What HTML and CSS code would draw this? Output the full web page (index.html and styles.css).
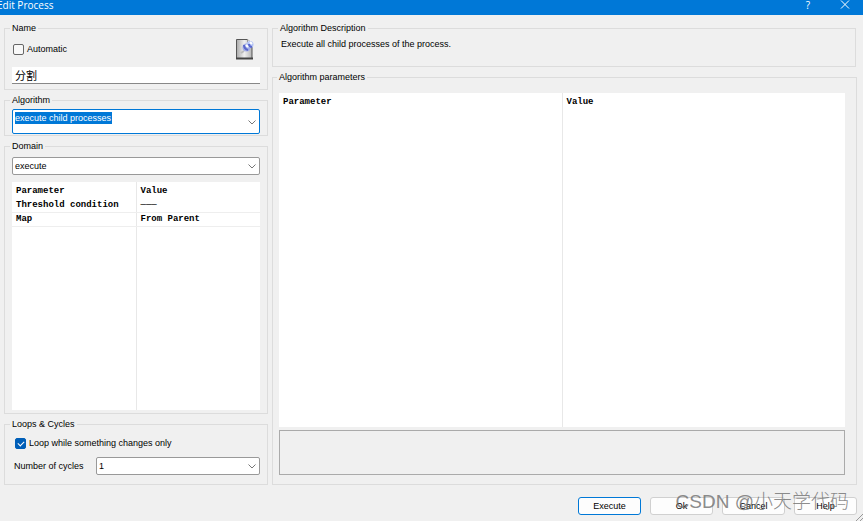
FILE: index.html
```html
<!DOCTYPE html>
<html lang="en">
<head>
    <meta charset="UTF-8">
    <meta name="viewport" content="width=device-width, initial-scale=1.0">
    <title>Edit Process</title>
    <link rel="stylesheet" href="styles.css">
</head>
<body>
    <header class="titlebar">
        <h1>Edit Process</h1>
        <button type="button" class="title-button" aria-label="What's this">?</button>
        <button type="button" class="title-button" aria-label="Close">
            <svg width="10" height="10" viewBox="0 0 10 10"><path d="M1 0.5l8 8M9 0.5l-8 8" stroke="#fff" fill="none"/></svg>
        </button>
    </header>

    <form class="dialog">
        <div class="columns">
            <div class="left">
                <fieldset class="name-group">
                    <legend>Name</legend>
                    <div class="name-row">
                        <label class="check"><input type="checkbox">Automatic</label>
                        <svg class="doc-icon" width="20" height="22" viewBox="0 0 20 22">
                            <defs>
                                <linearGradient id="page" x1="0" y1="0" x2="1" y2="0">
                                    <stop offset="0" stop-color="#a8a8a8"/>
                                    <stop offset="0.5" stop-color="#f0f0f0"/>
                                    <stop offset="1" stop-color="#b4b4b4"/>
                                </linearGradient>
                            </defs>
                            <path d="M1.5 1.5h11l4.500 4v15h-15.500z" fill="url(#page)" stroke="#555"/>
                            <path d="M1 20.500h17" stroke="#444" stroke-width="2"/>
                            <path d="M12.500 1.500v4h4.500" fill="#fff" stroke="#999"/>
                            <path d="M6 15l3-2" stroke="#bbb" stroke-width="2"/>
                            <circle cx="11.500" cy="9.500" r="4" fill="#a3aee6"/>
                            <circle cx="15" cy="6.500" r="3.500" fill="#b3c3f4"/>
                            <path d="M9 7c0 3 1 4 4 5M14 6c0 2 1 3 3 3" stroke="#5a67cc" stroke-width="2" fill="none"/>
                            <path d="M11 7l2 2M15 4l2 2" stroke="#fff" stroke-width="2"/>
                        </svg>
                    </div>
                    <input type="text" class="name-input" aria-label="Name" value="分割">
                </fieldset>

                <fieldset class="algorithm-group">
                    <legend>Algorithm</legend>
                    <div class="combo combo-active">
                        <select aria-label="Algorithm"><option>execute child processes</option></select>
                        <svg width="8" height="5" viewBox="0 0 8 5"><path d="M0.500 0.500L4 4l3.500-3.500" fill="none" stroke="#777"/></svg>
                    </div>
                </fieldset>

                <fieldset class="domain-group">
                    <legend>Domain</legend>
                    <div class="combo">
                        <select aria-label="Domain"><option>execute</option></select>
                        <svg width="8" height="5" viewBox="0 0 8 5"><path d="M0.500 0.500L4 4l3.500-3.500" fill="none" stroke="#777"/></svg>
                    </div>
                    <div class="grid domain-grid">
                        <table>
                            <thead>
                                <tr><th>Parameter</th><th>Value</th></tr>
                            </thead>
                            <tbody>
                                <tr><td>Threshold condition</td><td>───</td></tr>
                                <tr><td>Map</td><td>From Parent</td></tr>
                                <tr class="filler"><td></td><td></td></tr>
                            </tbody>
                        </table>
                    </div>
                </fieldset>

                <fieldset class="loops-group">
                    <legend>Loops &amp; Cycles</legend>
                    <label class="check"><input type="checkbox" checked>Loop while something changes only</label>
                    <div class="cycles-row">
                        <label for="cycles">Number of cycles</label>
                        <div class="combo">
                            <select id="cycles"><option>1</option></select>
                            <svg width="8" height="5" viewBox="0 0 8 5"><path d="M0.500 0.500L4 4l3.500-3.500" fill="none" stroke="#777"/></svg>
                        </div>
                    </div>
                </fieldset>
            </div>

            <div class="right">
                <fieldset class="description-group">
                    <legend>Algorithm Description</legend>
                    <p>Execute all child processes of the process.</p>
                </fieldset>

                <fieldset class="params-group">
                    <legend>Algorithm parameters</legend>
                    <div class="grid params-grid">
                        <table>
                            <thead>
                                <tr><th>Parameter</th><th>Value</th></tr>
                            </thead>
                            <tbody>
                                <tr class="filler"><td></td><td></td></tr>
                            </tbody>
                        </table>
                    </div>
                    <div class="help-box"></div>
                </fieldset>
            </div>
        </div>

        <footer class="buttons">
            <button type="button" class="default">Execute</button>
            <button type="button">Ok</button>
            <button type="button">Cancel</button>
            <button type="button">Help</button>
        </footer>
    </form>

    <div class="watermark">CSDN @小天学代码</div>
    <svg class="grip" width="7" height="7" viewBox="0 0 7 7"><path d="M0 7l7-7M4 7l3-3" stroke="#999"/></svg>
</body>
</html>
```
FILE: styles.css
```css
* {
    box-sizing: border-box;
}
body {
    margin: 0;
    min-height: 100vh;
    display: flex;
    flex-direction: column;
    position: relative;
    overflow: hidden;
    background-color: #f0f0f0;
    color: #000;
    font-family: "Liberation Sans", "Noto Sans CJK SC", sans-serif;
    font-size: 9px;
    line-height: 12px;
}
button, input, select {
    font: inherit;
    color: inherit;
}
.titlebar {
    display: flex;
    align-items: flex-start;
    height: 15px;
    padding-right: 11px;
    background-color: #0078d7;
    color: white;
}
.titlebar h1 {
    flex: 1;
    margin: 0 0 0 -3px;
    font-family: "Open Sans", sans-serif;
    font-size: 10px;
    font-weight: normal;
    line-height: 10px;
}
.title-button {
    width: 12px;
    height: 10px;
    margin-left: 26px;
    padding: 0;
    border: none;
    background: none;
    font-family: "Open Sans", sans-serif;
    font-size: 10px;
    line-height: 10px;
}
.title-button svg {
    display: block;
}
.dialog {
    flex: 1;
    display: flex;
    flex-direction: column;
    padding: 6px 6px 6px 4px;
}
.columns {
    flex: 1;
    display: grid;
    grid-template-columns: 264px 1fr;
    gap: 4px;
}
.left, .right {
    display: flex;
    flex-direction: column;
    gap: 3px;
}
fieldset {
    min-width: 0;
    margin: 0;
    padding: 0 7px;
    border: 1px solid #dcdcdc;
}
legend {
    margin-left: -2px;
    padding: 1px 2px;
}
.name-group {
    height: 69px;
}
.name-row {
    display: flex;
    justify-content: space-between;
    align-items: center;
    height: 28px;
    padding-right: 5px;
}
.name-input {
    width: 100%;
    height: 17px;
    margin-top: 4px;
    padding: 0 3px;
    border: none;
    border-bottom: 1px solid #888;
    background-color: white;
    font-size: 11px;
}
.check {
    display: flex;
    align-items: center;
    gap: 2px;
}
.check input {
    appearance: none;
    width: 11px;
    height: 11px;
    margin: 0 1px;
    border: 1px solid #666;
    border-radius: 2px;
    background-color: #f8f8f8;
}
.check input:checked {
    border-color: #005fb8;
    background-color: #005fb8;
}
.check input:checked::after {
    content: "";
    display: block;
    width: 5px;
    height: 3px;
    margin: 2px;
    border: solid white;
    border-width: 0 0 1px 1px;
    transform: rotate(-45deg);
}
.combo {
    position: relative;
    display: flex;
    flex: 1;
    height: 18px;
    border: 1px solid #999;
    border-radius: 2px;
    background-color: white;
}
.combo select {
    appearance: none;
    flex: 1;
    padding: 0 2px;
    border: none;
    background: none;
    outline: none;
}
.combo svg {
    position: absolute;
    right: 3px;
    top: calc(50% - 2px);
    pointer-events: none;
}
.combo-active {
    height: 25px;
    padding: 2px;
    border-color: #0078d7;
}
.combo-active select {
    flex: none;
    height: 12px;
    padding: 0;
    background-color: #0078d7;
    color: white;
}
.algorithm-group {
    height: 43px;
}
.algorithm-group .combo {
    margin-top: 2px;
}
.domain-group {
    flex: 1;
    display: flex;
    flex-direction: column;
    padding-bottom: 3px;
}
.domain-group .combo {
    flex: none;
    margin-top: 4px;
}
.grid {
    flex: 1;
    display: flex;
    background-color: white;
    font-family: "Liberation Mono", monospace;
    font-size: 9px;
    font-weight: bold;
}
.grid table {
    width: 100%;
    height: 100%;
    border-collapse: collapse;
    table-layout: fixed;
}
.grid th, .grid td {
    height: 14px;
    padding: 0 4px;
    border-bottom: 1px solid #eee;
    text-align: left;
    white-space: nowrap;
}
.grid th:first-child, .grid td:first-child {
    border-right: 1px solid #e8e8e8;
}
.grid th {
    height: 16px;
    padding-top: 2px;
    border-bottom: none;
}
.grid .filler td {
    height: auto;
    border-bottom: none;
}
.domain-grid {
    margin-top: 7px;
}
.loops-group {
    height: 68px;
}
.loops-group .check {
    margin-top: 6px;
    padding-left: 2px;
}
.cycles-row {
    display: flex;
    align-items: center;
    margin-top: 8px;
    padding-left: 2px;
}
.cycles-row label {
    width: 82px;
}
.description-group {
    height: 46px;
    margin-right: 1px;
}
.description-group p {
    margin: 3px 1px;
}
.params-group {
    flex: 1;
    display: flex;
    flex-direction: column;
    padding: 0 11px 9px 6px;
}
.params-grid {
    margin-top: 9px;
}
.help-box {
    height: 45px;
    margin-top: 3px;
    border: 1px solid #aaa;
}
.buttons {
    display: flex;
    justify-content: flex-end;
    gap: 9px;
    margin-top: 12px;
}
.buttons button {
    width: 63px;
    height: 18px;
    padding: 0;
    border: 1px solid #d0d0d0;
    border-radius: 3px;
    background-color: #fdfdfd;
}
.buttons .default {
    border-color: #0078d7;
}
.watermark {
    position: absolute;
    right: 14px;
    bottom: 7px;
    color: rgba(110, 110, 110, 0.8);
    font-family: "Liberation Sans", "Noto Sans CJK SC", sans-serif;
    font-size: 19px;
    font-weight: 300;
    line-height: 24px;
    pointer-events: none;
}
.grip {
    position: absolute;
    right: 0;
    bottom: 0;
}
```
